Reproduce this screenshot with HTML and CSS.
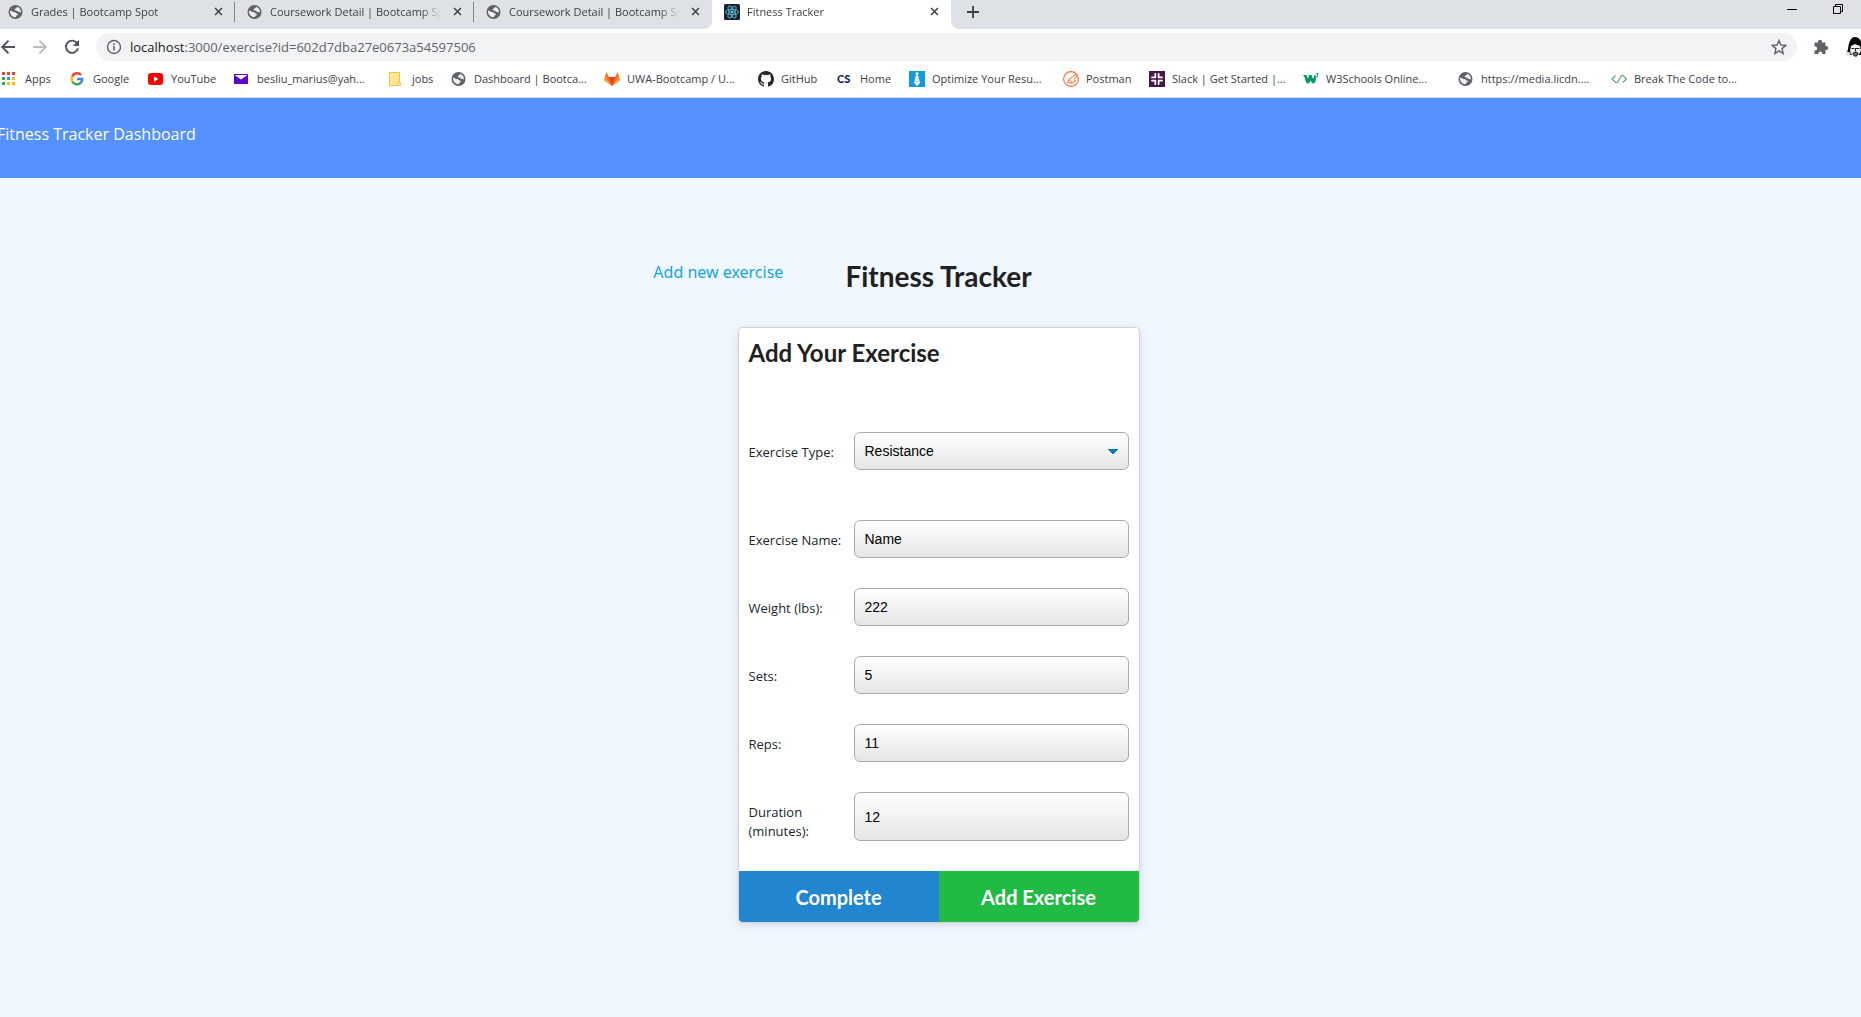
FILE: index.html
```html
<!DOCTYPE html>
<html lang="en">
<head>
<meta charset="utf-8">
<title>Fitness Tracker</title>
<link rel="stylesheet" href="styles.css">
</head>
<body>
<svg class="sprite" aria-hidden="true">
  <symbol id="globe" viewBox="0 0 16 16"><circle cx="7.500" cy="8" r="7" fill="#5f6368"/><path d="M2 6.500C3.500 6.500 4 8 6 8 8 8 7.500 9.500 9 9.500 10.500 9.800 10 11.500 8.500 11.500 8 12 8.500 12.800 7.500 13.200 4.500 13.200 1.500 10.500 2 6.500ZM9.500 3C8.500 3.200 8.500 4.200 7.500 4.500 6 4.800 6.500 6.500 8 6.500 9.500 6.500 9.500 8 11 8 12 8 12.300 8.500 12.800 8.800 13.300 6 12 3.800 9.500 3Z" fill="#eceef0"/></symbol>
  <symbol id="close" viewBox="0 0 10 10"><path d="M1.200 1.200 8.800 8.800M8.800 1.200 1.200 8.800" stroke="#3c4043" stroke-width="1.700"/></symbol>
</svg>

<header class="browser">
  <div class="tab-strip">
    <div class="tab"><svg class="icon"><use href="#globe"/></svg><span class="tab-title">Grades | Bootcamp Spot</span><button class="close" aria-label="Close tab"><svg><use href="#close"/></svg></button></div>
    <div class="tab"><svg class="icon"><use href="#globe"/></svg><span class="tab-title">Coursework Detail | Bootcamp Spot</span><button class="close" aria-label="Close tab"><svg><use href="#close"/></svg></button></div>
    <div class="tab"><svg class="icon"><use href="#globe"/></svg><span class="tab-title">Coursework Detail | Bootcamp Spot</span><button class="close" aria-label="Close tab"><svg><use href="#close"/></svg></button></div>
    <div class="tab active">
      <svg class="icon" viewBox="0 0 16 16"><rect width="16" height="16" rx="1.500" fill="#20232a"/><g fill="none" stroke="#53b8d4" stroke-width=".9"><ellipse cx="8" cy="8" rx="6.600" ry="2.500"/><ellipse cx="8" cy="8" rx="6.600" ry="2.500" transform="rotate(60 8 8)"/><ellipse cx="8" cy="8" rx="6.600" ry="2.500" transform="rotate(120 8 8)"/></g><circle cx="8" cy="8" r="1.300" fill="#61dafb"/></svg>
      <span class="tab-title">Fitness Tracker</span><button class="close" aria-label="Close tab"><svg><use href="#close"/></svg></button>
    </div>
    <div class="strip-rest">
      <button class="new-tab" aria-label="New tab"><svg viewBox="0 0 12 12"><path d="M6 0V12M0 6H12" stroke="#3c4043" stroke-width="1.800"/></svg></button>
      <div class="window-controls">
        <button aria-label="Minimize"><svg viewBox="0 0 10 10"><path d="M0 5.500H10" stroke="#000"/></svg></button>
        <button aria-label="Restore"><svg viewBox="0 0 10 10"><path d="M.5 2.500H7.500V9.500H.5ZM2.500 2.500V.5H9.500V7.500H7.500" fill="none" stroke="#000"/></svg></button>
      </div>
    </div>
  </div>

  <div class="toolbar">
    <button aria-label="Back"><svg viewBox="0 0 16 16"><path d="M15 8H2.500M8.500 1.700 2.200 8 8.500 14.300" fill="none" stroke="#50545a" stroke-width="1.900"/></svg></button>
    <button aria-label="Forward"><svg viewBox="0 0 16 16"><path d="M1 8H13.500M7.500 1.700 13.800 8 7.500 14.300" fill="none" stroke="#bbbdc0" stroke-width="1.900"/></svg></button>
    <button aria-label="Reload"><svg viewBox="0 0 16 16"><path d="M13.200 4.400A6.100 6.100 0 1 0 14 9.300" fill="none" stroke="#50545a" stroke-width="1.900"/><path d="M15 .8V7H8.800Z" fill="#50545a"/></svg></button>
    <div class="address">
      <svg class="icon" viewBox="0 0 16 16"><circle cx="8" cy="8" r="6.500" fill="none" stroke="#5f6368" stroke-width="1.400"/><path d="M8 7V11.500M8 4.300V5.900" stroke="#5f6368" stroke-width="1.600"/></svg>
      <span class="url"><span class="host">localhost</span>:3000/exercise?id=602d7dba27e0673a54597506</span>
      <button aria-label="Bookmark this page"><svg viewBox="0 0 16 16"><path d="M8 1.500 9.900 6 14.800 6.400 11.100 9.600 12.200 14.400 8 11.800 3.800 14.400 4.900 9.600 1.200 6.400 6.100 6Z" fill="none" stroke="#5f6368" stroke-width="1.400"/></svg></button>
    </div>
    <button class="extensions" aria-label="Extensions"><svg viewBox="0 0 16 16"><path d="M1.500 3.500H5V2.800A2 2 0 0 1 9 2.800V3.500H12.500V7H13.200A2 2 0 0 1 13.200 11H12.500V15H9.300V14.300A1.900 1.900 0 0 0 5.500 14.300V15H1.500V11.500H2.200A1.900 1.900 0 0 0 2.200 7.600H1.500Z" fill="#5f6368"/></svg></button>
    <button class="avatar" aria-label="Profile"><svg viewBox="0 0 22 22"><path d="M3 13C4 5 6 1 10 1S17 5 19 13L21 19H1Z" fill="#050505"/><path d="M1 15 6 17 4 20 1 19ZM16 16 21 15V19L17 20Z" fill="#ddd"/><path d="M6 10 10 8 15 10 16 15 13 20 10 21 7 19 5 15Z" fill="#eee"/><path d="M6.500 12.500H9.500M11 12.500H14.500M8 17.500 10.500 16 13 17.500 11.500 20H9.500ZM10.500 12V15" fill="#777" stroke="#222" stroke-width="1.100"/></svg></button>
  </div>

  <nav class="bookmarks" aria-label="Bookmarks">
    <a href="#"><svg class="icon" viewBox="0 0 16 16"><g fill="#ea4335"><path d="M0 1H3V4H0ZM5 1H8V4H5ZM10 1H13V4H10Z"/></g><path d="M0 6H3V9H0ZM0 11H3V14H0Z" fill="#34a853"/><path d="M5 6H8V9H5Z" fill="#4285f4"/><path d="M10 6H13V9H10ZM5 11H8V14H5ZM10 11H13V14H10Z" fill="#fbbc05"/></svg>Apps</a>
    <a href="#"><svg class="icon" viewBox="0 0 16 16"><g fill="none" stroke-width="2.400"><path d="M11.100 4A5.200 5.200 0 0 0 2.300 5.600" stroke="#ea4335"/><path d="M2.300 5.600A5.200 5.200 0 0 0 2.300 10.400" stroke="#fbbc05"/><path d="M2.300 10.400A5.200 5.200 0 0 0 10.500 12" stroke="#34a853"/><path d="M10.500 12A5 5 0 0 0 12.200 8H7" stroke="#4285f4"/></g></svg>Google</a>
    <a href="#"><svg class="icon" viewBox="0 0 16 16"><rect y="2" width="15" height="12" rx="3" fill="#f00"/><path d="M6 5.300V10.700L10.300 8Z" fill="#fff"/></svg>YouTube</a>
    <a href="#"><svg class="icon" viewBox="0 0 16 16"><rect y="3" width="14" height="10" fill="#5f01d1"/><path d="M.5 4H13.500L7 8.500Z" fill="#fff"/></svg>besliu_marius@yah...</a>
    <a href="#"><svg class="icon" viewBox="0 0 16 16"><path d="M.5 1.500H10.500V14.500H.5Z" fill="#ffe692" stroke="#e8c24c"/><rect x="9" y="11" width="2.500" height="4" rx="1" fill="#ffe692" stroke="#e8c24c" stroke-width=".8"/></svg>jobs</a>
    <a href="#"><svg class="icon"><use href="#globe"/></svg>Dashboard | Bootca...</a>
    <a href="#"><svg class="icon" viewBox="0 0 16 16"><path d="M8 15 0 9 2.500 1 5 6H11L13.500 1 16 9Z" fill="#fc6d26"/><path d="M8 15 5 6H11Z" fill="#e24329"/><path d="M0 9 1 6 8 15ZM16 9 15 6 8 15Z" fill="#fca326"/></svg>UWA-Bootcamp / U...</a>
    <a href="#"><svg class="icon" viewBox="0 0 16 16"><path fill="#24292e" d="M8 0C3.580 0 0 3.580 0 8c0 3.540 2.290 6.530 5.470 7.590.4.070.55-.17.55-.38 0-.19-.010-.82-.010-1.490-2.010.37-2.530-.49-2.690-.94-.090-.23-.48-.94-.82-1.130-.28-.15-.68-.52-.010-.53.63-.010 1.080.58 1.230.82.72 1.210 1.870.87 2.330.66.070-.52.28-.87.51-1.070-1.780-.2-3.640-.89-3.640-3.950 0-.87.31-1.590.82-2.150-.080-.2-.36-1.020.080-2.120 0 0 .67-.21 2.200.82a7.600 7.600 0 0 1 4 0c1.530-1.040 2.200-.82 2.200-.82.44 1.100.16 1.920.080 2.120.51.56.82 1.270.82 2.150 0 3.070-1.870 3.750-3.650 3.950.29.25.54.73.54 1.480 0 1.070-.010 1.930-.010 2.200 0 .21.15.46.55.38A8.010 8.010 0 0 0 16 8c0-4.420-3.580-8-8-8z"/></svg>GitHub</a>
    <a href="#"><span class="icon cs">CS</span>Home</a>
    <a href="#"><svg class="icon" viewBox="0 0 16 16"><rect width="16" height="16" fill="#139bd9"/><path d="M6.500 1.500H9.500L9 4.500H7ZM6.800 5H9.200L11 12 8 15 5 12Z" fill="#fff"/><path d="M6 10 10 6.500M6.200 12.500 10.500 9" stroke="#8fd0ef"/></svg>Optimize Your Resu...</a>
    <a href="#"><svg class="icon" viewBox="0 0 16 16"><g fill="none" stroke="#ff6c37"><circle cx="8" cy="8" r="7.400" stroke-width="1.100"/><path d="M12.500 3.500 6 8.500 9.500 12 13 9.500M4.500 11.500 6 8.500M4.500 11.500 9.500 12M12.500 3.500 13.500 5.500 11 8.500 12.500 10"/></g></svg>Postman</a>
    <a href="#"><svg class="icon" viewBox="0 0 16 16"><rect width="16" height="16" fill="#4a154b"/><g fill="none" stroke="#fff" stroke-width="1.800" stroke-linecap="round"><path d="M6.300 5.200V3M3 6.400H6.300M9.600 6.400V3M10.800 6.400H13M6.300 9.600V13M5.200 9.600H3M9.600 10.800V13M9.600 9.600H13"/></g></svg>Slack | Get Started |...</a>
    <a href="#"><svg class="icon" viewBox="0 0 16 16"><path d="M0 4H3.500L5 8 6 4H8.500L10 8 11.500 4H12.500C13.500 8 12.500 12.500 10.500 12.500 9 12.500 8.500 11 7.500 9.500 7 11 6.500 12.500 5 12.500 3 12.500 2.500 10 1.800 6.500Z" fill="#059862"/><path d="M13 2.500H15.300L14.300 4Q16.300 5.500 13 6.200" fill="none" stroke="#059862" stroke-width=".9"/></svg>W3Schools Online...</a>
    <a href="#"><svg class="icon"><use href="#globe"/></svg>https://media.licdn....</a>
    <a href="#"><svg class="icon" viewBox="0 0 16 16"><path d="M4.500 4.500 1 8 4.500 11.500H6.500L10.500 4.500H12L15.500 8 12 11.500" fill="none" stroke="#63a276" stroke-width="1.200"/></svg>Break The Code to...</a>
  </nav>
</header>

<nav class="app-bar"><a href="#">Fitness Tracker Dashboard</a></nav>

<main class="page">
  <div class="heading">
    <a class="new-exercise" href="#">Add new exercise</a>
    <h1>Fitness Tracker</h1>
  </div>
  <form class="card">
    <div class="card-body">
      <h2>Add Your Exercise</h2>
      <div class="field type"><label for="type">Exercise Type:</label><select id="type"><option>Resistance</option><option>Cardio</option></select></div>
      <div class="fields">
        <div class="field"><label for="name">Exercise Name:</label><input id="name" type="text" value="Name"></div>
        <div class="field"><label for="weight">Weight (lbs):</label><input id="weight" type="text" value="222"></div>
        <div class="field"><label for="sets">Sets:</label><input id="sets" type="text" value="5"></div>
        <div class="field"><label for="reps">Reps:</label><input id="reps" type="text" value="11"></div>
        <div class="field"><label for="duration">Duration (minutes):</label><input id="duration" type="text" value="12"></div>
      </div>
    </div>
    <div class="actions">
      <button class="complete" type="button">Complete</button>
      <button class="add" type="button">Add Exercise</button>
    </div>
  </form>
</main>
</body>
</html>
```

FILE: styles.css
```css
* { box-sizing: border-box; }

body {
  margin: 0;
  min-height: 100vh;
  overflow: hidden;
  background: #f0f7ff;
  color: #212529;
  font-family: "Open Sans", "Noto Sans", sans-serif;
}

button { border: 0; padding: 0; background: none; font: inherit; }
a { text-decoration: none; }
svg { display: block; }
.sprite { display: none; }
.icon { width: 16px; height: 16px; flex: none; }

/* Browser window */
.browser {
  background: #fff;
  border-bottom: 1px solid #dadce0;
  color: #3c4043;
  font-size: 11px;
}

.tab-strip { display: flex; height: 29px; }
.tab {
  display: flex;
  flex: none;
  align-items: center;
  width: 239px;
  padding: 0 12px 6px;
  background: #dee1e6 linear-gradient(#80868b, #80868b) right 2px / 1px 20px no-repeat;
}
.tab:first-child { width: 235px; padding-left: 8px; }
.tab:nth-child(3) { width: 238px; background: #dee1e6; border-radius: 0 0 8px 0; }
.tab.active { background: #fff; }
.tab-title {
  flex: 1;
  margin-left: 7px;
  overflow: hidden;
  white-space: nowrap;
  mask-image: linear-gradient(to left, transparent, #000 20px);
}
.close { margin-left: 12px; }
.close svg { width: 9px; height: 9px; }
.strip-rest {
  display: flex;
  flex: 1;
  justify-content: space-between;
  padding-left: 16px;
  background: #dee1e6;
  border-radius: 0 0 0 8px;
}
.new-tab { padding-bottom: 6px; }
.new-tab svg { width: 12px; height: 12px; }
.window-controls {
  display: flex;
  gap: 36px;
  padding: 4px 18px 0 0;
  align-items: flex-start;
}
.window-controls svg { width: 10px; height: 10px; }

.toolbar {
  display: flex;
  align-items: center;
  gap: 16px;
  height: 36px;
  overflow: hidden;
}
.toolbar button { flex: none; }
.toolbar svg { width: 16px; height: 16px; }
.address {
  display: flex;
  flex: 1;
  align-items: center;
  height: 28px;
  padding: 0 10px;
  border-radius: 14px;
  background: #f1f3f4;
}
.url { flex: 1; margin-left: 8px; color: #5f6368; font-size: 13px; }
.host { color: #202124; }
.toolbar .avatar { width: 16px; }
.toolbar .avatar svg { width: 22px; height: 22px; }

.bookmarks {
  display: grid;
  grid-template-columns: 68px 78px 86px 155px 62px 153px 154px 79px 72px 154px 86px 154px 155px 153px 160px;
  align-items: center;
  height: 32px;
  padding: 0 0 5px 2px;
}
.bookmarks a {
  display: flex;
  align-items: center;
  gap: 7px;
  color: #3c4043;
  white-space: nowrap;
}
.cs { color: #0f2a56; font: 900 11px/16px Lato, sans-serif; }

/* Application */
.app-bar {
  height: 80px;
  padding-top: 24px;
  background: #5591ff;
}
.app-bar a {
  display: block;
  margin-left: -3px;
  color: #fff;
  font-size: 16px;
  line-height: 24px;
}

.page { padding: 80px 0 40px 16px; }
.heading {
  display: grid;
  grid-template-columns: 1fr auto 1fr;
  column-gap: 62px;
}
.heading h1 { grid-column: 2; }
.new-exercise {
  justify-self: end;
  color: #15a4e8;
  font-family: "Noto Sans", sans-serif;
  font-size: 16px;
  line-height: 28px;
}
h1, h2 { margin: 0; color: #212121; font-family: Lato, sans-serif; font-weight: 700; }
h1 { font-size: 28px; line-height: 36px; }
h2 { font-size: 24px; line-height: 30px; }

.card {
  width: 400px;
  margin: 34px auto 0;
  border-radius: 4px;
  background: #fff;
  box-shadow: 0 1px 3px #d4d4d5, 0 0 0 1px #d4d4d5, 0 2px 12px rgba(60, 60, 110, .16);
  overflow: hidden;
}
.card-body { padding: 10px 10px 30px; }
.type { margin: 64px 0 50px; }
.fields { display: grid; gap: 30px; }
.field { display: grid; grid-template-columns: 105px 1fr; }
.field label {
  padding-top: 11px;
  font-size: 13px;
  line-height: 18px;
}
.field input,
.field select {
  width: 100%;
  min-height: 38px;
  padding: 0 10px;
  border: 1px solid #aaa;
  border-radius: 6px;
  background: linear-gradient(#fff, #e5e5e5);
  color: #000;
  font: 14px "Liberation Sans", Arial, sans-serif;
  appearance: none;
}
.field select {
  background:
    conic-gradient(from -45deg at 50% 100%, #007cb2 90deg, transparent 0) right 10px center / 10px 5px no-repeat,
    linear-gradient(#fff, #e5e5e5);
}
.field:last-child input { min-height: 48px; }
.field:last-child label { line-height: 19px; }
.actions { display: grid; grid-template-columns: 1fr 1fr; }
.actions button {
  padding: 14px 0 13px;
  color: #fff;
  font: 700 20px/24px Lato, sans-serif;
}
.complete { background: #2185d0; }
.add { background: #21ba45; }
```
